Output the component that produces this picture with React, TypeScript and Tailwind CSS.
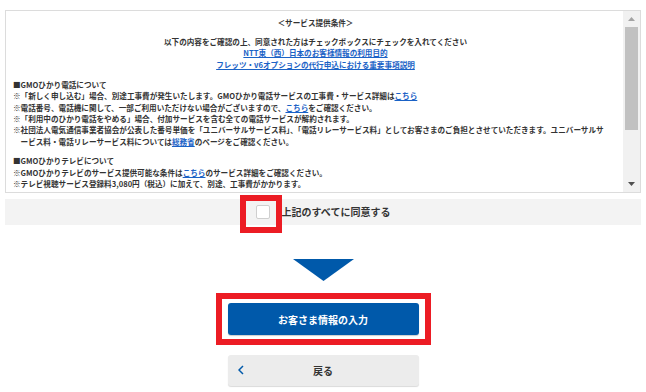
import React from "react";

const FONT = { fontFamily: '"Noto Sans CJK JP", "Noto Sans", sans-serif' };

function A({ children }: { children: React.ReactNode }) {
  return <span className="text-[#1a62c6] underline underline-offset-[1px]">{children}</span>;
}

export default function App() {
  return (
    <div className="w-[646px] h-[392px] bg-white overflow-hidden" style={FONT}>
      <div className="pt-[10px] px-[5px]">
        <div className="h-[183px] border border-[#dcdcdc] flex">
          <div className="flex-1 overflow-hidden pl-[7px] pr-[5px] pt-[6px] text-[7.6px] leading-[11.4px] font-bold text-[#333]">
            <p className="text-center">＜サービス提供条件＞</p>
            <p className="text-center mt-[7.6px]">以下の内容をご確認の上、同意された方はチェックボックスにチェックを入れてください</p>
            <p className="text-center"><A>NTT東（西）日本のお客様情報の利用目的</A></p>
            <p className="text-center"><A>フレッツ・v6オプションの代行申込における重要事項説明</A></p>
            <div className="mt-[8.5px]">
              <p>■GMOひかり電話について</p>
              <p>※「新しく申し込む」場合、別途工事費が発生いたします。GMOひかり電話サービスの工事費・サービス詳細は<A>こちら</A></p>
              <p>※電話番号、電話機に関して、一部ご利用いただけない場合がございますので、<A>こちら</A>をご確認ください。</p>
              <p>※「利用中のひかり電話をやめる」場合、付加サービスを含む全ての電話サービスが解約されます。</p>
              <p className="pl-[7.6px] -indent-[7.6px] whitespace-nowrap">
                ※社団法人電気通信事業者協会が公表した番号単価を「ユニバーサルサービス料」、「電話リレーサービス料」としてお客さまのご負担とさせていただきます。ユニバーサルサ
                <br />
                ービス料・電話リレーサービス料については<A>総務省</A>のページをご確認ください。
              </p>
            </div>
            <div className="mt-[8.3px]">
              <p>■GMOひかりテレビについて</p>
              <p>※GMOひかりテレビのサービス提供可能な条件は<A>こちら</A>のサービス詳細をご確認ください。</p>
              <p>※テレビ視聴サービス登録料3,080円（税込）に加えて、別途、工事費がかかります。</p>
            </div>
          </div>
          <div className="w-[17px] bg-[#f1f1f1] flex flex-col items-center">
            <div className="h-[16px] w-full flex items-center justify-center">
              <svg width="7" height="4" viewBox="0 0 7 4"><polygon points="3.5,0 7,4 0,4" fill="#a3a3a3" /></svg>
            </div>
            <div className="w-[13px] h-[103px] bg-[#c1c1c1]" />
            <div className="flex-1" />
            <div className="h-[16px] w-full flex items-center justify-center">
              <svg width="7" height="4" viewBox="0 0 7 4"><polygon points="0,0 7,0 3.5,4" fill="#505050" /></svg>
            </div>
          </div>
        </div>
        <div className="mt-[6px] h-[26px] bg-[#f3f3f3] flex items-center justify-center gap-[12px]">
          <div className="relative w-[14px] h-[14px]">
            <div className="w-[14px] h-[14px] bg-white border border-[#cfcfcf] rounded-[2px]" />
            <div className="absolute left-[-16px] top-[-10px] w-[42px] h-[38px] border-[6px] border-[#ec1c24]" />
          </div>
          <span className="text-[10px] font-bold text-[#333] leading-none">上記のすべてに同意する</span>
        </div>
      </div>
      <div className="flex flex-col items-center">
        <svg className="mt-[34px]" width="61" height="22" viewBox="0 0 61 22">
          <polygon points="0,0 61,0 30.5,22" fill="#0059aa" />
        </svg>
        <div className="mt-[12px] border-[6px] border-[#ec1c24] px-[6px] py-[4px]">
          <div className="w-[191px] h-[32px] rounded-[3px] bg-[#0059aa] flex items-center justify-center text-white text-[10px] font-bold shadow-[0_1px_1px_rgba(0,0,0,0.2)]">
            お客さま情報の入力
          </div>
        </div>
        <div className="mt-[10px] relative w-[191px] h-[31px] rounded-[3px] bg-[#ececec] flex items-center justify-center text-[#333] text-[10px] font-bold shadow-[0_1px_1px_rgba(0,0,0,0.15)]">
          <svg className="absolute left-[10px] top-[10px]" width="6" height="10" viewBox="0 0 6 10">
            <polyline points="5,1 1,5 5,9" fill="none" stroke="#0059aa" strokeWidth="1.5" />
          </svg>
          戻る
        </div>
      </div>
    </div>
  );
}
